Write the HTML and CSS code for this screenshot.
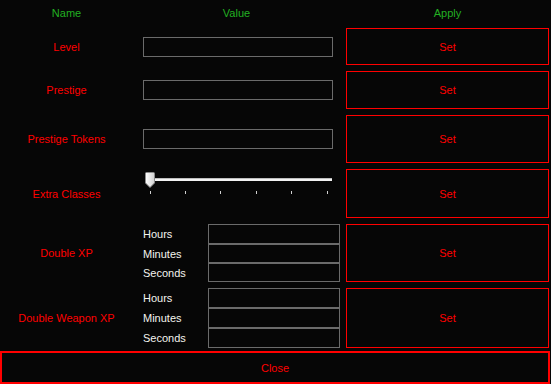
FILE: index.html
```html
<!DOCTYPE html>
<html>
<head>
<meta charset="utf-8">
<link rel="stylesheet" href="styles.css">
</head>
<body>
<div class="app">
  <div class="row head">
    <div class="cell hd">Name</div>
    <div class="cell hd hd-value">Value</div>
    <div class="cell hd">Apply</div>
  </div>

  <div class="row r1">
    <div class="cell name">Level</div>
    <div class="value"><div class="tb"></div></div>
    <button class="set">Set</button>
  </div>

  <div class="row r2">
    <div class="cell name">Prestige</div>
    <div class="value"><div class="tb"></div></div>
    <button class="set">Set</button>
  </div>

  <div class="row r3">
    <div class="cell name">Prestige Tokens</div>
    <div class="value"><div class="tb"></div></div>
    <button class="set">Set</button>
  </div>

  <div class="row r4">
    <div class="cell name">Extra Classes</div>
    <div class="value slider-wrap">
      <svg class="slider" width="192" height="30" viewBox="0 0 192 30">
        <defs>
          <linearGradient id="thumbg" x1="0" y1="0" x2="1" y2="0">
            <stop offset="0" stop-color="#ffffff"/>
            <stop offset="1" stop-color="#cfcfcf"/>
          </linearGradient>
        </defs>
        <rect x="7" y="9" width="182" height="3" fill="#f2f2f2"/>
        <rect x="7" y="9" width="182" height="1" fill="#bdbdbd"/>
        <g fill="#d0d0d0">
          <rect x="7" y="22" width="1" height="3"/>
          <rect x="42" y="22" width="1" height="3"/>
          <rect x="77" y="22" width="1" height="3"/>
          <rect x="113" y="22" width="1" height="3"/>
          <rect x="148" y="22" width="1" height="3"/>
          <rect x="184" y="22" width="1" height="3"/>
        </g>
        <path d="M3.5 3.5 H10.5 Q11.5 3.5 11.5 4.5 V14 L7 18.5 L2.5 14 V4.5 Q2.5 3.5 3.5 3.5 Z" fill="url(#thumbg)" stroke="#8a8a8a" stroke-width="1"/>
      </svg>
    </div>
    <button class="set">Set</button>
  </div>

  <div class="row r5">
    <div class="cell name">Double XP</div>
    <div class="value time">
      <span class="tl">Hours</span><div class="tb2 h20"></div>
      <span class="tl">Minutes</span><div class="tb2 h19"></div>
      <span class="tl">Seconds</span><div class="tb2 h19"></div>
    </div>
    <button class="set">Set</button>
  </div>

  <div class="row r6">
    <div class="cell name">Double Weapon XP</div>
    <div class="value time">
      <span class="tl">Hours</span><div class="tb2 h20"></div>
      <span class="tl">Minutes</span><div class="tb2 h20"></div>
      <span class="tl">Seconds</span><div class="tb2 h20"></div>
    </div>
    <button class="set">Set</button>
  </div>

  <button class="close">Close</button>
</div>
</body>
</html>
```
FILE: styles.css
```css
html, body {
  margin: 0;
  padding: 0;
  background: #060606;
}
body {
  width: 551px;
  height: 384px;
  overflow: hidden;
  font-family: "Liberation Sans", Arial, sans-serif;
  font-size: 11px;
}
.app {
  display: flex;
  flex-direction: column;
  gap: 6px;
}
.row {
  display: grid;
  grid-template-columns: 133px 213px 203px;
}
.head { height: 28px; margin-bottom: -6px; }
.r1 { height: 37px; }
.r2 { height: 38px; }
.r3 { height: 48px; }
.r4 { height: 49px; }
.r5 { height: 58px; }
.r6 { height: 60px; }

.cell {
  display: flex;
  align-items: center;
  justify-content: center;
  color: #ff0000;
  white-space: nowrap;
}
.hd {
  color: #22b022;
  padding-bottom: 2px;
}
.hd-value {
  padding-right: 6px;
}
.value {
  display: flex;
  align-items: center;
  padding-left: 10px;
  padding-right: 6px;
}
.tb {
  width: 190px;
  height: 20px;
  box-sizing: border-box;
  border: 1px solid #6a6a6a;
  background: #060606;
}
.slider-wrap {
  align-items: flex-start;
}
.slider {
  display: block;
}
.time {
  display: grid;
  grid-template-columns: 65px 132px;
  align-items: stretch;
  align-content: start;
}
.tl {
  color: #f4f4ee;
  display: flex;
  align-items: center;
}
.tb2 {
  box-sizing: border-box;
  border: 1px solid #6a6a6a;
}
.h20 { height: 20px; }
.h19 { height: 19px; }

.set {
  margin: 0;
  padding: 0;
  box-sizing: border-box;
  border: 1px solid #ff0000;
  background: #060606;
  color: #ff0000;
  font-family: "Liberation Sans", Arial, sans-serif;
  font-size: 11px;
}
.close {
  margin: -3px 0 0 0;
  padding: 0;
  width: 550px;
  height: 33px;
  box-sizing: border-box;
  border: 2px solid #ff0000;
  background: #060606;
  color: #ff0000;
  font-family: "Liberation Sans", Arial, sans-serif;
  font-size: 11px;
}
```
